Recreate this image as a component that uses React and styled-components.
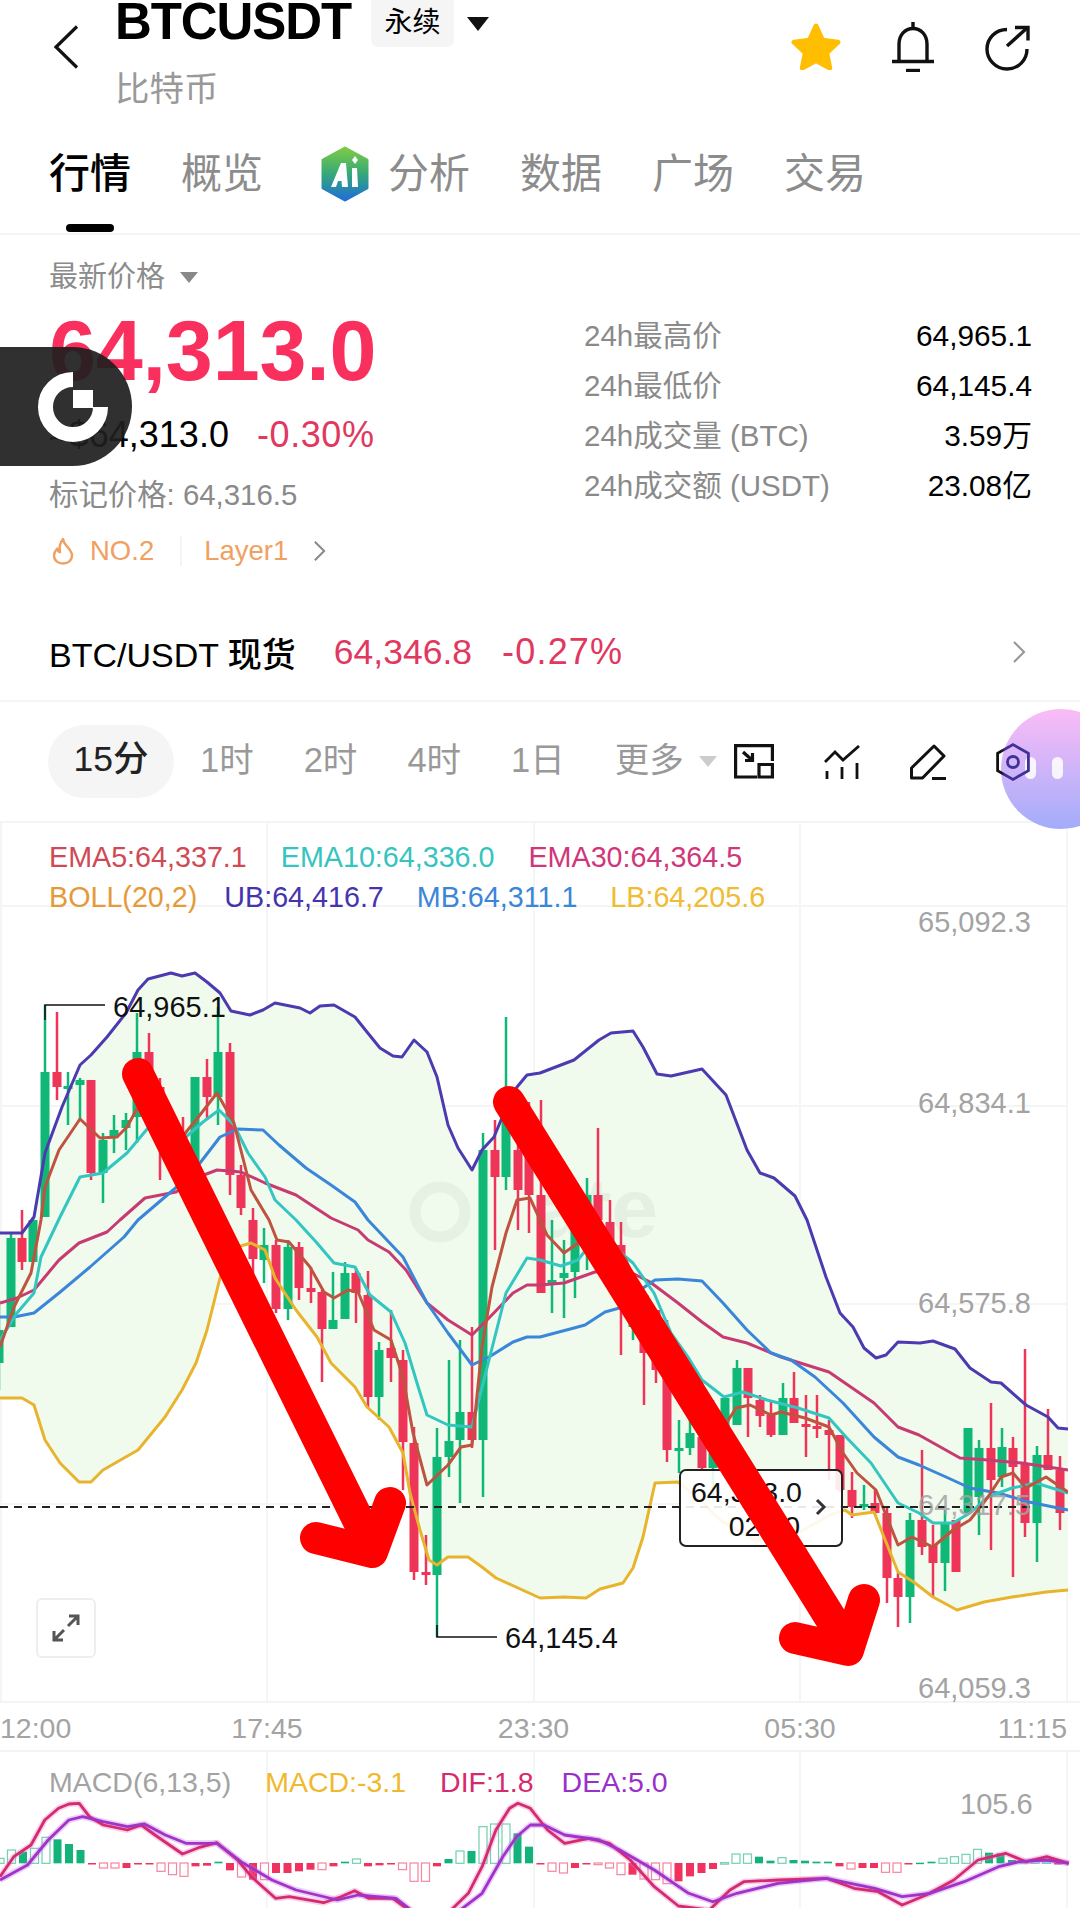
import React from "react";
import styled, { createGlobalStyle } from "styled-components";

const FONT = `"Liberation Sans", "Noto Sans CJK SC", sans-serif`;

const Global = createGlobalStyle`
  html, body { margin: 0; padding: 0; background: #fff; }
  body { font-family: ${FONT}; color: #000; }
  * { box-sizing: border-box; }
`;

const Page = styled.div`
  position: relative;
  width: 1080px;
  height: 1908px;
  overflow: hidden;
  background: #fff;
`;

/* ---------- header ---------- */
const Header = styled.header`
  display: flex;
  height: 130px;
  padding: 0 48px 0 53px;
`;
const BackIcon = styled.svg`
  width: 26px;
  height: 44px;
  margin-top: 25px;
  flex: none;
`;
const TitleBlock = styled.div`
  margin-left: 36px;
`;
const TitleRow = styled.div`
  display: flex;
  align-items: flex-start;
  height: 47px;
`;
const Title = styled.h1`
  margin: 0;
  font-size: 51px;
  line-height: 44px;
  font-weight: 700;
  letter-spacing: -1.1px;
`;
const KindBadge = styled.span`
  width: 83px;
  height: 47px;
  margin-left: 20px;
  background: #f5f5f5;
  border-radius: 0 0 7px 7px;
  font-size: 28px;
  line-height: 46px;
  text-align: center;
`;
const Caret = styled.span`
  width: 0;
  height: 0;
  margin-top: ${(p) => p.$top ?? 17}px;
  margin-left: ${(p) => p.$left ?? 13}px;
  border-left: ${(p) => p.$w ?? 11}px solid transparent;
  border-right: ${(p) => p.$w ?? 11}px solid transparent;
  border-top: ${(p) => p.$h ?? 14}px solid ${(p) => p.$color ?? "#111"};
`;
const Subtitle = styled.div`
  margin-top: 24px;
  font-size: 34.5px;
  line-height: 36px;
  color: #999;
`;
const Actions = styled.div`
  display: flex;
  align-items: flex-start;
  gap: 48px;
  margin-left: auto;
  padding-top: 22px;
`;
const ActionIcon = styled.svg`
  display: block;
  flex: none;
`;

/* ---------- tabs ---------- */
const Tabs = styled.nav`
  display: flex;
  align-items: flex-start;
  gap: 50px;
  height: 105px;
  padding: 22px 0 0 49px;
  border-bottom: 2px solid #f2f4f5;
`;
const Tab = styled.div`
  position: relative;
  display: flex;
  align-items: center;
  gap: 18px;
  height: 44px;
  margin-left: ${(p) => p.$ml ?? 0}px;
  font-size: 41px;
  line-height: 44px;
  font-weight: ${(p) => (p.$active ? 500 : 400)};
  color: ${(p) => (p.$active ? "#000" : "#8c8c8c")};
  ${(p) =>
    p.$active &&
    `&::after {
      content: "";
      position: absolute;
      left: 17px;
      top: 72px;
      width: 48px;
      height: 8px;
      border-radius: 4px;
      background: #000;
    }`}
`;

/* ---------- quote ---------- */
const Quote = styled.section`
  display: flex;
  height: 365px;
  padding: 0 48px 0 49px;
`;
const QuoteLeft = styled.div`
  padding-top: 26px;
`;
const PriceLabel = styled.div`
  display: flex;
  font-size: 29px;
  line-height: 32px;
  color: #8c8c8c;
`;
const Price = styled.div`
  margin-top: 16px;
  font-size: 84.5px;
  line-height: 84px;
  font-weight: 700;
  letter-spacing: -0.2px;
  color: #f9305e;
`;
const SubPrice = styled.div`
  display: flex;
  gap: 28px;
  margin-top: 22px;
  font-size: 36px;
  line-height: 40px;
`;
const Change = styled.span`
  color: #e0385f;
  letter-spacing: 0.6px;
`;
const MarkPrice = styled.div`
  margin-top: 22px;
  font-size: 29.4px;
  line-height: 36px;
  color: #8a8a8a;
`;
const TagRow = styled.div`
  display: flex;
  align-items: center;
  margin-top: 20px;
  height: 36px;
  font-size: 27.5px;
  color: #f0a062;
`;
const TagDivider = styled.i`
  width: 2px;
  height: 30px;
  margin: 0 22px 0 26px;
  background: #f4f4f4;
`;
const Stats = styled.div`
  width: 448px;
  margin-left: auto;
  padding-top: 76px;
`;
const StatRow = styled.div`
  display: flex;
  justify-content: space-between;
  height: 50px;
  line-height: 50px;
  font-size: 29.5px;
  color: #8a8a8a;
`;
const StatValue = styled.span`
  color: #000;
  font-size: 29.8px;
`;
const SpotRow = styled.div`
  display: flex;
  align-items: center;
  height: 102px;
  padding: 4px 54px 0 49px;
  border-bottom: 2px solid #f2f4f5;
`;
const SpotName = styled.span`
  font-size: 34px;
  font-weight: 500;
  color: #000;
`;
const SpotPrice = styled.span`
  margin-left: 38px;
  font-size: 35.5px;
  color: #e0385f;
`;
const SpotChange = styled.span`
  margin-left: 30px;
  font-size: 36px;
  letter-spacing: 1.2px;
  color: #e0385f;
`;

/* ---------- periods ---------- */
const Periods = styled.div`
  display: flex;
  align-items: center;
  height: 121px;
  padding: 0 49px 0 48px;
  border-bottom: 2px solid #f2f4f5;
`;
const ActivePeriod = styled.div`
  width: 126px;
  height: 73px;
  margin-right: 26px;
  border-radius: 37px;
  background: #f5f5f5;
  font-size: 35.5px;
  font-weight: 500;
  line-height: 69px;
  text-align: center;
  color: #222;
`;
const Period = styled.span`
  font-size: 34.5px;
  line-height: 40px;
  margin-top: -4px;
  color: #999;
  & + & {
    margin-left: 50px;
  }
`;
const ToolIcons = styled.div`
  display: flex;
  align-items: center;
  gap: 50px;
  margin-left: auto;
  padding-right: 1px;
`;
const HexIcon = styled.svg`
  position: relative;
  z-index: 2;
`;
const Bubble = styled.div`
  position: absolute;
  left: 1001px;
  top: 709px;
  width: 120px;
  height: 120px;
  display: flex;
  gap: 16px;
  padding: 48px 0 0 24px;
  border-radius: 50%;
  background: linear-gradient(180deg, rgba(250, 184, 246, 0.95), rgba(158, 168, 250, 0.95));
`;
const BubbleBar = styled.i`
  width: 11px;
  height: 22px;
  border-radius: 6px;
  background: rgba(255, 255, 255, 0.85);
`;

/* ---------- chart ---------- */
const ChartPanel = styled.div`
  position: relative;
  height: 880px;
  border-bottom: 2px solid #f2f4f5;
`;
const ChartSvg = styled.svg`
  display: block;
  width: 1080px;
  height: ${(p) => p.$h}px;
  overflow: visible;
`;
const ArrowLayer = styled.svg`
  position: absolute;
  left: 0;
  top: 0;
  width: 1080px;
  height: 878px;
  pointer-events: none;
`;
const Legend = styled.div`
  position: absolute;
  left: 49px;
  top: ${(p) => p.$top}px;
  display: flex;
  gap: ${(p) => p.$gap}px;
  font-size: ${(p) => p.$size}px;
  line-height: 40px;
  white-space: nowrap;
`;
const LegendItem = styled.span`
  color: ${(p) => p.$color};
  margin-left: ${(p) => p.$ml ?? 0}px;
`;
const AxisText = styled.text`
  font-family: ${FONT};
  font-size: 29px;
  fill: ${(p) => p.$fill ?? "#a3a3a3"};
`;
const Watermark = styled.text`
  font-family: ${FONT};
  font-size: 84px;
  font-weight: 700;
  fill: rgba(120, 140, 120, 0.1);
`;
const PriceTag = styled.div`
  position: absolute;
  left: 679px;
  top: 646px;
  width: 164px;
  height: 78px;
  padding: 4px 41px 0 10px;
  border: 2px solid #222;
  border-radius: 7px;
  background: rgba(255, 255, 255, 0.9);
  font-size: 28.5px;
  line-height: 34px;
  text-align: right;
  color: #111;
`;
const TagChevron = styled.svg`
  position: absolute;
  right: 14px;
  top: 27px;
`;
const Expand = styled.div`
  position: absolute;
  left: 36px;
  top: 775px;
  width: 60px;
  height: 60px;
  display: flex;
  align-items: center;
  justify-content: center;
  border: 2px solid #eeeeee;
  border-radius: 6px;
  background: #fff;
`;

const TimeAxis = styled.div`
  display: grid;
  grid-template-columns: 134px 266px 267px 266px 134px;
  height: 49px;
  border-bottom: 2px solid #f2f4f5;
  font-size: 28.5px;
  line-height: 50px;
  color: #a3a3a3;
`;
const TimeLabel = styled.span`
  text-align: ${(p) => p.$align ?? "center"};
  padding-left: ${(p) => p.$pad ?? 0}px;
`;
const MacdPanel = styled.div`
  position: relative;
  height: 156px;
`;

/* ---------- floating logo ---------- */
const FloatBadge = styled.div`
  position: absolute;
  left: 0;
  top: 347px;
  width: 132px;
  height: 119px;
  display: flex;
  align-items: center;
  padding-left: 36px;
  border-radius: 0 60px 60px 0;
  background: rgba(30, 30, 30, 0.92);
`;

/* ---------- data ---------- */
const UB = [[0,1233],[22,1233],[34,1217],[45,1153],[62,1107],[80,1065],[91,1055],[107,1037],[126,1013],[138,990],[148,979],[171,973],[182,976],[195,973],[207,982],[220,993],[231,1011],[250,1015],[263,1010],[275,1003],[300,1008],[310,1013],[320,1006],[334,1005],[355,1017],[367,1032],[380,1048],[393,1056],[402,1057],[414,1040],[427,1052],[437,1077],[448,1125],[458,1148],[472,1170],[482,1150],[494,1137],[506,1108],[517,1087],[527,1075],[540,1073],[574,1060],[599,1040],[611,1033],[633,1031],[643,1047],[657,1074],[671,1076],[702,1069],[726,1095],[747,1150],[760,1173],[774,1178],[795,1196],[807,1220],[826,1277],[840,1313],[853,1327],[864,1348],[876,1358],[886,1355],[898,1342],[920,1343],[933,1341],[955,1349],[970,1368],[991,1382],[1001,1383],[1026,1405],[1048,1417],[1058,1428],[1068,1429]];
const LB = [[0,1398],[22,1398],[34,1405],[45,1440],[60,1463],[79,1482],[91,1482],[103,1470],[138,1450],[165,1417],[182,1390],[196,1363],[207,1330],[220,1278],[234,1248],[251,1243],[265,1250],[275,1278],[296,1310],[317,1337],[331,1363],[355,1387],[367,1407],[389,1427],[403,1453],[410,1493],[420,1530],[429,1560],[437,1565],[448,1557],[468,1557],[482,1567],[496,1578],[540,1598],[564,1597],[586,1598],[600,1589],[623,1583],[633,1568],[643,1537],[655,1483],[678,1482],[700,1500],[720,1520],[755,1540],[800,1532],[830,1515],[845,1510],[852,1515],[874,1512],[884,1537],[898,1572],[915,1583],[933,1597],[957,1610],[984,1602],[1012,1597],[1046,1592],[1068,1590]];
const MB = [[0,1317],[14,1317],[34,1313],[59,1293],[90,1267],[124,1237],[138,1220],[179,1185],[200,1163],[220,1137],[238,1129],[263,1130],[279,1145],[306,1168],[331,1185],[355,1202],[368,1220],[403,1257],[427,1303],[448,1333],[472,1365],[489,1357],[513,1342],[527,1337],[540,1337],[574,1328],[585,1325],[605,1312],[623,1307],[640,1290],[655,1280],[678,1279],[702,1281],[723,1303],[747,1330],[771,1353],[791,1360],[815,1377],[843,1403],[874,1437],[898,1457],[919,1465],[946,1477],[970,1488],[998,1493],[1029,1502],[1068,1510]];
const E30 = [[0,1303],[17,1298],[34,1290],[59,1260],[79,1243],[107,1232],[120,1220],[145,1198],[176,1192],[196,1178],[217,1170],[241,1172],[265,1183],[296,1195],[331,1218],[358,1230],[368,1240],[389,1252],[406,1270],[427,1303],[448,1320],[472,1335],[489,1318],[513,1293],[527,1285],[540,1285],[564,1283],[595,1272],[626,1270],[650,1282],[678,1303],[702,1322],[723,1337],[747,1343],[781,1357],[829,1372],[874,1403],[898,1427],[919,1435],[960,1458],[988,1460],[1022,1463],[1068,1470]];
const E10 = [[0,1340],[17,1313],[34,1293],[41,1257],[60,1217],[80,1177],[103,1173],[127,1153],[148,1128],[179,1143],[203,1122],[219,1110],[234,1125],[248,1153],[265,1177],[275,1200],[296,1220],[317,1243],[334,1263],[355,1267],[370,1295],[391,1312],[405,1343],[417,1383],[427,1415],[448,1425],[472,1427],[489,1360],[506,1293],[527,1258],[540,1260],[561,1266],[578,1260],[588,1247],[609,1243],[633,1263],[654,1293],[671,1333],[688,1357],[702,1380],[724,1397],[743,1392],[767,1400],[798,1408],[829,1418],[846,1437],[871,1463],[898,1503],[919,1513],[933,1523],[953,1523],[970,1513],[988,1497],[1012,1488],[1036,1483],[1068,1493]];
const E5 = [[0,1347],[14,1307],[31,1273],[41,1220],[45,1187],[59,1150],[80,1119],[100,1138],[117,1137],[127,1127],[138,1107],[160,1120],[182,1137],[196,1120],[217,1093],[234,1123],[251,1190],[269,1220],[277,1240],[289,1242],[310,1267],[324,1292],[334,1298],[348,1290],[358,1292],[374,1330],[391,1340],[403,1377],[413,1433],[427,1485],[448,1465],[461,1447],[472,1445],[482,1347],[492,1287],[506,1233],[517,1200],[530,1198],[547,1235],[564,1253],[578,1243],[585,1227],[602,1227],[626,1260],[640,1293],[665,1340],[700,1395],[722,1430],[736,1408],[750,1405],[771,1415],[781,1412],[805,1418],[829,1427],[843,1453],[857,1473],[876,1490],[888,1520],[898,1545],[912,1537],[933,1547],[953,1530],[970,1520],[988,1497],[1001,1477],[1013,1473],[1026,1488],[1046,1477],[1068,1492]];

// x, wick top, wick bottom, body top, body bottom, colour
const CANDLES = [
  [-1,1300,1390,1330,1363,"g"],[11,1232,1327,1238,1327,"g"],[22,1210,1270,1238,1262,"r"],[33,1217,1262,1220,1262,"g"],
  [45,1005,1217,1072,1217,"g"],[57,1012,1100,1072,1087,"r"],[68,1072,1125,1086,1089,"g"],[80,1078,1120,1080,1085,"g"],
  [91,1080,1180,1080,1173,"r"],[103,1133,1203,1140,1173,"g"],[114,1115,1153,1130,1138,"g"],[126,1113,1150,1120,1128,"g"],
  [137,1013,1143,1052,1117,"g"],[149,1033,1110,1052,1087,"r"],[160,1078,1180,1087,1127,"r"],[172,1120,1165,1130,1150,"r"],
  [183,1117,1170,1147,1170,"r"],[195,1077,1190,1077,1173,"g"],[207,1059,1120,1077,1097,"r"],[218,1007,1125,1052,1097,"g"],
  [230,1043,1195,1052,1175,"r"],[241,1165,1215,1175,1208,"r"],[253,1208,1283,1220,1259,"r"],[264,1228,1283,1245,1260,"g"],
  [276,1240,1313,1245,1309,"r"],[288,1240,1320,1247,1309,"g"],[299,1242,1300,1247,1288,"r"],[311,1267,1303,1288,1292,"r"],
  [322,1290,1382,1292,1329,"r"],[333,1272,1329,1320,1329,"g"],[345,1262,1319,1273,1319,"g"],[356,1268,1323,1273,1293,"r"],
  [368,1271,1408,1295,1397,"r"],[379,1342,1420,1350,1397,"g"],[391,1310,1382,1348,1358,"r"],[403,1350,1490,1360,1442,"r"],
  [414,1427,1580,1443,1572,"r"],[426,1535,1585,1572,1575,"r"],[437,1428,1637,1457,1575,"g"],[449,1360,1477,1441,1457,"g"],
  [460,1340,1503,1412,1440,"g"],[472,1327,1448,1412,1440,"r"],[483,1133,1497,1150,1440,"g"],[495,1120,1250,1150,1177,"r"],
  [506,1017,1190,1120,1177,"g"],[518,1100,1230,1150,1190,"r"],[529,1102,1233,1145,1195,"r"],[541,1100,1293,1195,1293,"r"],
  [552,1220,1313,1280,1283,"g"],[564,1240,1318,1273,1278,"g"],[575,1190,1298,1230,1272,"g"],[587,1178,1270,1195,1227,"g"],
  [598,1128,1220,1195,1220,"r"],[610,1200,1245,1222,1245,"r"],[621,1222,1355,1245,1273,"r"],[633,1273,1340,1285,1327,"g"],
  [644,1295,1405,1295,1353,"r"],[656,1310,1383,1310,1370,"r"],[667,1320,1462,1340,1450,"r"],[679,1420,1473,1448,1450,"g"],
  [690,1420,1455,1433,1448,"g"],[702,1380,1470,1437,1468,"r"],[713,1400,1500,1453,1468,"g"],[725,1398,1470,1398,1470,"g"],
  [737,1360,1425,1368,1425,"g"],[748,1368,1437,1368,1398,"r"],[760,1395,1427,1400,1416,"r"],[771,1400,1437,1415,1435,"r"],
  [783,1383,1435,1398,1435,"g"],[794,1372,1423,1398,1423,"r"],[806,1395,1457,1424,1427,"r"],[817,1395,1438,1426,1429,"r"],
  [829,1420,1480,1430,1435,"r"],[840,1435,1492,1435,1490,"r"],[852,1472,1518,1490,1507,"r"],[864,1485,1510,1504,1507,"g"],
  [875,1490,1515,1503,1513,"r"],[887,1508,1603,1513,1578,"r"],[898,1573,1627,1578,1597,"r"],[910,1513,1623,1520,1597,"g"],
  [922,1450,1555,1520,1547,"r"],[933,1525,1597,1545,1563,"r"],[945,1510,1591,1523,1563,"g"],[956,1520,1572,1520,1572,"r"],
  [968,1428,1513,1428,1513,"g"],[979,1440,1535,1448,1497,"g"],[991,1403,1550,1448,1480,"r"],[1002,1428,1487,1447,1477,"g"],
  [1013,1437,1577,1448,1467,"r"],[1025,1349,1537,1463,1523,"r"],[1037,1446,1562,1455,1523,"g"],[1048,1409,1470,1455,1470,"r"],
  [1060,1456,1530,1470,1513,"r"],
];

const MACD_BARS = [
  [535,1],[510,1],[515,0],[505,1],[472,1],[478,0],[492,0],[510,0],[550,0],[565,1],[565,1],[565,0],[552,0],[552,0],[575,1],[585,1],[590,1],[560,0],[558,0],[545,0],
  [572,0],[592,1],[600,0],[600,1],[580,0],[580,0],[575,0],[570,0],[570,1],[560,0],[545,0],[537,1],[560,0],[557,0],[552,0],[570,1],[605,1],[605,1],[560,0],
  [537,0],[513,1],[513,0],[440,1],[432,1],[432,1],[460,0],[500,0],[550,0],[575,1],[580,1],[565,0],[552,0],[555,1],[565,1],[585,1],[585,0],[598,1],[600,1],[612,1],[605,0],[590,0],[580,0],[568,0],
  [548,1],[522,1],[522,1],[530,0],[542,0],[533,1],[540,0],[542,0],[545,0],[545,0],[560,0],[568,1],[565,0],[565,0],[578,1],[578,1],[552,0],[548,0],[545,0],[535,1],[530,1],[523,1],[508,1],[518,0],[520,0],[540,0],[545,1],[540,1],[545,1],[552,0],
];
const DIF = [[0,590],[20,530],[45,495],[65,420],[85,385],[100,372],[115,370],[130,410],[150,435],[185,450],[205,435],[225,465],[265,522],[290,502],[315,488],[345,540],[365,590],[400,655],[420,650],[470,668],[495,650],[515,632],[535,655],[570,655],[600,700],[650,700],[680,640],[700,560],[720,450],[740,385],[752,370],[770,385],[795,450],[820,490],[855,475],[885,490],[915,540],[950,620],[985,678],[1030,690],[1060,630],[1080,605],[1130,600],[1200,595],[1240,625],[1275,635],[1310,675],[1345,645],[1385,600],[1420,540],[1460,520],[1490,545],[1520,530],[1552,550]];
const DEA = [[0,600],[40,555],[70,480],[100,420],[120,410],[150,425],[185,440],[210,432],[240,465],[270,490],[315,490],[350,545],[395,600],[430,630],[490,660],[520,645],[575,655],[600,695],[665,695],[700,640],[730,530],[750,470],[770,435],[790,435],[820,465],[870,480],[900,510],[950,570],[1000,640],[1035,665],[1070,640],[1130,610],[1200,595],[1270,625],[1310,650],[1350,640],[1400,605],[1450,560],[1480,545],[1520,540],[1552,550]];

const pts = (a) => a.map(([x, y]) => `${x},${y}`).join(" ");
const macdPts = (a) => a.map(([x, y]) => `${(x / 1.452).toFixed(1)},${(1680 + y / 3).toFixed(1)}`).join(" ");
const GRID_X = [1, 267, 534, 800, 1067];
const GREEN = "#10b877";
const RED = "#ee3558";

function Chart() {
  const fill = pts([...UB, ...[...LB].reverse()]);
  const lines = [[E30, "#c83a72"], [MB, "#3a86d8"], [E10, "#33c6c0"], [E5, "#c0533f"]];
  return (
    <ChartSvg $h={878} viewBox="0 823 1080 878">
      <defs>
        <clipPath id="plot"><rect x="0" y="823" width="1068" height="878" /></clipPath>
      </defs>
      {GRID_X.map((x) => <line key={x} x1={x} x2={x} y1="823" y2="1701" stroke="#f4f6f6" strokeWidth="2" />)}
      {[906, 1106, 1304, 1504].map((y) => <line key={y} x1="0" x2="1067" y1={y} y2={y} stroke="#f4f6f6" strokeWidth="2" />)}
      <polygon points={fill} fill="#f0fbee" />
      <g opacity="0.9">
        <circle cx="440" cy="1212" r="25" fill="none" stroke="rgba(120,140,120,0.1)" strokeWidth="11" />
        <Watermark x="537" y="1237" textLength="121">ate</Watermark>
      </g>
      <g clipPath="url(#plot)">
        {CANDLES.map(([x, wt, wb, bt, bb, c]) => (
          <g key={x} fill={c === "g" ? GREEN : RED}>
            <rect x={x - 1.25} y={wt} width="2.5" height={wb - wt} />
            <rect x={x - 4.5} y={bt} width="9" height={Math.max(bb - bt, 3)} />
          </g>
        ))}
        <polyline points={pts(UB)} fill="none" stroke="#4b3ab0" strokeWidth="3" strokeLinejoin="round" />
        <polyline points={pts(LB)} fill="none" stroke="#e8b42e" strokeWidth="3" strokeLinejoin="round" />
        {lines.map(([d, c]) => <polyline key={c} points={pts(d)} fill="none" stroke={c} strokeWidth="3" strokeLinejoin="round" />)}
      </g>
      <line x1="0" x2="1030" y1="1507" y2="1507" stroke="#222" strokeWidth="2" strokeDasharray="8 6" />
      <polyline points="45,1020 45,1005 105,1005" fill="none" stroke="#111" strokeWidth="1.6" />
      <AxisText x="113" y="1017" $fill="#111">64,965.1</AxisText>
      <polyline points="437,1625 437,1637 497,1637" fill="none" stroke="#111" strokeWidth="1.6" />
      <AxisText x="505" y="1648" $fill="#111">64,145.4</AxisText>
      <AxisText x="918" y="932">65,092.3</AxisText>
      <AxisText x="918" y="1113">64,834.1</AxisText>
      <AxisText x="918" y="1313">64,575.8</AxisText>
      <AxisText x="918" y="1515" opacity="0.85">64,317.5</AxisText>
      <AxisText x="918" y="1698">64,059.3</AxisText>
    </ChartSvg>
  );
}

function Macd() {
  return (
    <ChartSvg $h={156} viewBox="0 1752 1080 156">
      {GRID_X.slice(1).map((x) => <line key={x} x1={x} x2={x} y1="1752" y2="1908" stroke="#f4f6f6" strokeWidth="2" />)}
      {MACD_BARS.map(([end, hollow], i) => {
        if (i * 11.5 > 1068) return null;
        const up = end < 550;
        const c = up ? "#12b27a" : "#f0325f";
        const y = up ? 1680 + end / 3 : 1863;
        const h = Math.max(Math.abs(end - 550) / 3, 1.5);
        return (
          <rect key={i} x={i * 11.5 - 4} y={y} width="8" height={h}
            fill={hollow ? "#fff" : c} stroke={c} strokeOpacity={hollow ? 0.6 : 1} strokeWidth={hollow ? 1.2 : 0} />
        );
      })}
      <polyline points={macdPts(DIF)} fill="none" stroke="rgba(235,120,200,0.35)" strokeWidth="6" strokeLinejoin="round" />
      <polyline points={macdPts(DEA)} fill="none" stroke="rgba(200,110,235,0.35)" strokeWidth="6" strokeLinejoin="round" />
      <polyline points={macdPts(DIF)} fill="none" stroke="#d62a6e" strokeWidth="2.8" strokeLinejoin="round" />
      <polyline points={macdPts(DEA)} fill="none" stroke="#a033c8" strokeWidth="2.8" strokeLinejoin="round" />
      <AxisText x="960" y="1814">105.6</AxisText>
    </ChartSvg>
  );
}

const Chevron = ({ w = 14, h = 24, color = "#888" }) => (
  <svg width={w} height={h} viewBox="0 0 14 24" fill="none">
    <path d="M2 2l10 10L2 22" stroke={color} strokeWidth="2.2" />
  </svg>
);

export default function App() {
  return (
    <Page>
      <Global />
      <Header>
        <BackIcon viewBox="0 0 26 44" fill="none">
          <path d="M24 1.500L3 22l21 20.500" stroke="#111" strokeWidth="3.2" />
        </BackIcon>
        <TitleBlock>
          <TitleRow>
            <Title>BTCUSDT</Title>
            <KindBadge>永续</KindBadge>
            <Caret />
          </TitleRow>
          <Subtitle>比特币</Subtitle>
        </TitleBlock>
        <Actions>
          <ActionIcon width="52" height="48" viewBox="0 0 52 48">
            <path d="M26 4l6.600 14.200 15.400 2-11.300 10.600 3 15.200L26 38.500 12.300 46l3-15.200L4 20.200l15.400-2z" fill="#ffbf00" stroke="#ffbf00" strokeWidth="5" strokeLinejoin="round" />
          </ActionIcon>
          <ActionIcon width="46" height="50" viewBox="0 0 46 50" fill="none" stroke="#111" strokeWidth="3.4">
            <path d="M23 0v6" />
            <path d="M9 39V22C9 13 15 6.500 23 6.500S37 13 37 22v17" />
            <path d="M2 39.500h42" />
            <path d="M16 48.500h14" />
          </ActionIcon>
          <ActionIcon width="48" height="46" viewBox="0 0 48 46" fill="none" stroke="#111" strokeWidth="3.4" style={{ marginTop: 3 }}>
            <path d="M23 4.500C11.500 4.500 3 13.500 3 24s8.500 20 20 20 20-9 20-20" />
            <path d="M23 21L43 3" />
            <path d="M31 2.500h13v13" />
          </ActionIcon>
        </Actions>
      </Header>

      <Tabs>
        <Tab $active>行情</Tab>
        <Tab>概览</Tab>
        <Tab $ml={7}>
          <svg width="50" height="56" viewBox="0 0 50 56">
            <defs>
              <linearGradient id="aiGrad" x1="0" y1="0" x2="0" y2="1">
                <stop offset="0" stopColor="#7ccb45" />
                <stop offset="0.5" stopColor="#35a878" />
                <stop offset="1" stopColor="#1e6fd9" />
              </linearGradient>
            </defs>
            <path d="M25 2L47 14v28L25 54 3 42V14z" fill="url(#aiGrad)" stroke="url(#aiGrad)" strokeWidth="3" strokeLinejoin="round" />
            <path d="M11 41L21 17h5l2 24h-6l-.5-6H18l-2 6z" fill="#fff" />
            <path d="M32 22h5l1 19h-6z" fill="#fff" />
            <path d="M35 10l3 4-3 4-3-4z" fill="#fff" />
          </svg>
          分析
        </Tab>
        <Tab>数据</Tab>
        <Tab>广场</Tab>
        <Tab>交易</Tab>
      </Tabs>

      <Quote>
        <QuoteLeft>
          <PriceLabel>最新价格<Caret $color="#888" $left={15} $top={11} $w={9} $h={11} /></PriceLabel>
          <Price>64,313.0</Price>
          <SubPrice><span>≈$64,313.0</span><Change>-0.30%</Change></SubPrice>
          <MarkPrice>标记价格: 64,316.5</MarkPrice>
          <TagRow>
            <svg width="24" height="28" viewBox="0 0 24 28" fill="none" style={{ marginRight: 15, marginLeft: 2 }}>
              <path d="M12 2c.5 4.500 3 6 5 8.500 2.800 3.400 4 5.600 4 8 0 4.800-4 8-9 8s-9-3.200-9-8c0-3 1.500-5.200 3.200-7 .3 2 1.200 3.200 2.800 3.800C8 10 9 5.500 12 2z" stroke="#f0a062" strokeWidth="2.4" strokeLinejoin="round" />
            </svg>
            NO.2
            <TagDivider />
            Layer1
            <span style={{ marginLeft: 25, display: "flex" }}><Chevron w={13} h={24} color="#8a8a8a" /></span>
          </TagRow>
        </QuoteLeft>
        <Stats>
          <StatRow><span>24h最高价</span><StatValue>64,965.1</StatValue></StatRow>
          <StatRow><span>24h最低价</span><StatValue>64,145.4</StatValue></StatRow>
          <StatRow><span>24h成交量 (BTC)</span><StatValue>3.59万</StatValue></StatRow>
          <StatRow><span>24h成交额 (USDT)</span><StatValue>23.08亿</StatValue></StatRow>
        </Stats>
      </Quote>

      <SpotRow>
        <SpotName>BTC/USDT 现货</SpotName>
        <SpotPrice>64,346.8</SpotPrice>
        <SpotChange>-0.27%</SpotChange>
        <span style={{ marginLeft: "auto", display: "flex" }}><Chevron w={14} h={24} color="#999" /></span>
      </SpotRow>

      <Periods>
        <ActivePeriod>15分</ActivePeriod>
        <Period>1时</Period>
        <Period>2时</Period>
        <Period>4时</Period>
        <Period>1日</Period>
        <Period>更多</Period>
        <Caret $color="#ccc" $left={15} $top={0} $w={9} $h={11} />
        <ToolIcons>
          <svg width="40" height="35" viewBox="0 0 40 35" fill="none" stroke="#111" strokeWidth="3.2">
            <path d="M23 33H1.600V1.600H38.400V17" />
            <path d="M25 20.500h13.400V33H25z" />
            <path d="M9 8l9 8" />
            <path d="M18.500 9v7.500H11" />
          </svg>
          <svg width="36" height="34" viewBox="0 0 36 34" fill="none" stroke="#111" strokeWidth="2.8">
            <path d="M1 17L11 7l8 8L35 1" />
            <path d="M3 26v8M18 22v12M33 18v16" />
          </svg>
          <svg width="36" height="36" viewBox="0 0 36 36" fill="none" stroke="#111" strokeWidth="3">
            <path d="M1.500 24L24 2l10 10-21.500 22H1.500z" strokeLinejoin="round" />
            <path d="M22 34.500h14" />
          </svg>
          <HexIcon width="34" height="38" viewBox="0 0 34 38" fill="none">
            <defs>
              <linearGradient id="hexStroke" x1="0" y1="0" x2="1" y2="0">
                <stop offset="0.12" stopColor="#111" />
                <stop offset="0.24" stopColor="#3f3196" />
              </linearGradient>
            </defs>
            <path d="M17 1.600L32.400 10.300v17.400L17 36.400 1.600 27.700V10.300z" stroke="url(#hexStroke)" strokeWidth="2.8" />
            <circle cx="17" cy="19" r="5.500" stroke="#3f3196" strokeWidth="2.8" />
          </HexIcon>
        </ToolIcons>
      </Periods>

      <ChartPanel>
        <Chart />
        <Legend $top={14} $gap={34} $size={28.7}>
          <LegendItem $color="#cf4a55">EMA5:64,337.1</LegendItem>
          <LegendItem $color="#35c4c0">EMA10:64,336.0</LegendItem>
          <LegendItem $color="#d0367a">EMA30:64,364.5</LegendItem>
        </Legend>
        <Legend $top={54} $gap={33} $size={28.7}>
          <LegendItem $color="#e59a3a">BOLL(20,2)</LegendItem>
          <LegendItem $color="#4534ae" $ml={-6}>UB:64,416.7</LegendItem>
          <LegendItem $color="#3a86d8">MB:64,311.1</LegendItem>
          <LegendItem $color="#efbc34">LB:64,205.6</LegendItem>
        </Legend>
        <PriceTag>
          64,313.0
          <br />
          02:20
          <TagChevron width="12" height="18" viewBox="0 0 12 18" fill="none">
            <path d="M2 2l7 7-7 7" stroke="#333" strokeWidth="3" />
          </TagChevron>
        </PriceTag>
        <Expand>
          <svg width="30" height="30" viewBox="0 0 30 30" fill="none" stroke="#555" strokeWidth="3">
            <path d="M18 3h9v9M27 3L17 13M12 27H3v-9M3 27l10-10" />
          </svg>
        </Expand>
        <ArrowLayer viewBox="0 823 1080 878" fill="none" stroke="#ff0000" strokeWidth="32" strokeLinecap="round" strokeLinejoin="round">
          <path d="M138 1074L372 1548" />
          <path d="M316 1538L372 1552L390 1503" />
          <path d="M509 1102L848 1646" />
          <path d="M795 1638L848 1650L864 1600" />
        </ArrowLayer>
      </ChartPanel>

      <TimeAxis>
        <TimeLabel $align="left">12:00</TimeLabel>
        <TimeLabel>17:45</TimeLabel>
        <TimeLabel>23:30</TimeLabel>
        <TimeLabel>05:30</TimeLabel>
        <TimeLabel $align="right">11:15</TimeLabel>
      </TimeAxis>

      <MacdPanel>
        <Macd />
        <Legend $top={10} $gap={34} $size={28.5}>
          <LegendItem $color="#a3a3a3">MACD(6,13,5)</LegendItem>
          <LegendItem $color="#f0b92d">MACD:-3.1</LegendItem>
          <LegendItem $color="#d62a6e">DIF:1.8</LegendItem>
          <LegendItem $color="#9a30c8" $ml={-6}>DEA:5.0</LegendItem>
        </Legend>
      </MacdPanel>

      <Bubble><BubbleBar /><BubbleBar /></Bubble>
      <FloatBadge>
        <svg width="74" height="70" viewBox="0 0 74 70" fill="none">
          <path d="M37 7.500A27.500 27.500 0 1 0 64.500 35" stroke="#fff" strokeWidth="15" />
          <path d="M37 18h20v18H37z" fill="#fff" />
        </svg>
      </FloatBadge>
    </Page>
  );
}
